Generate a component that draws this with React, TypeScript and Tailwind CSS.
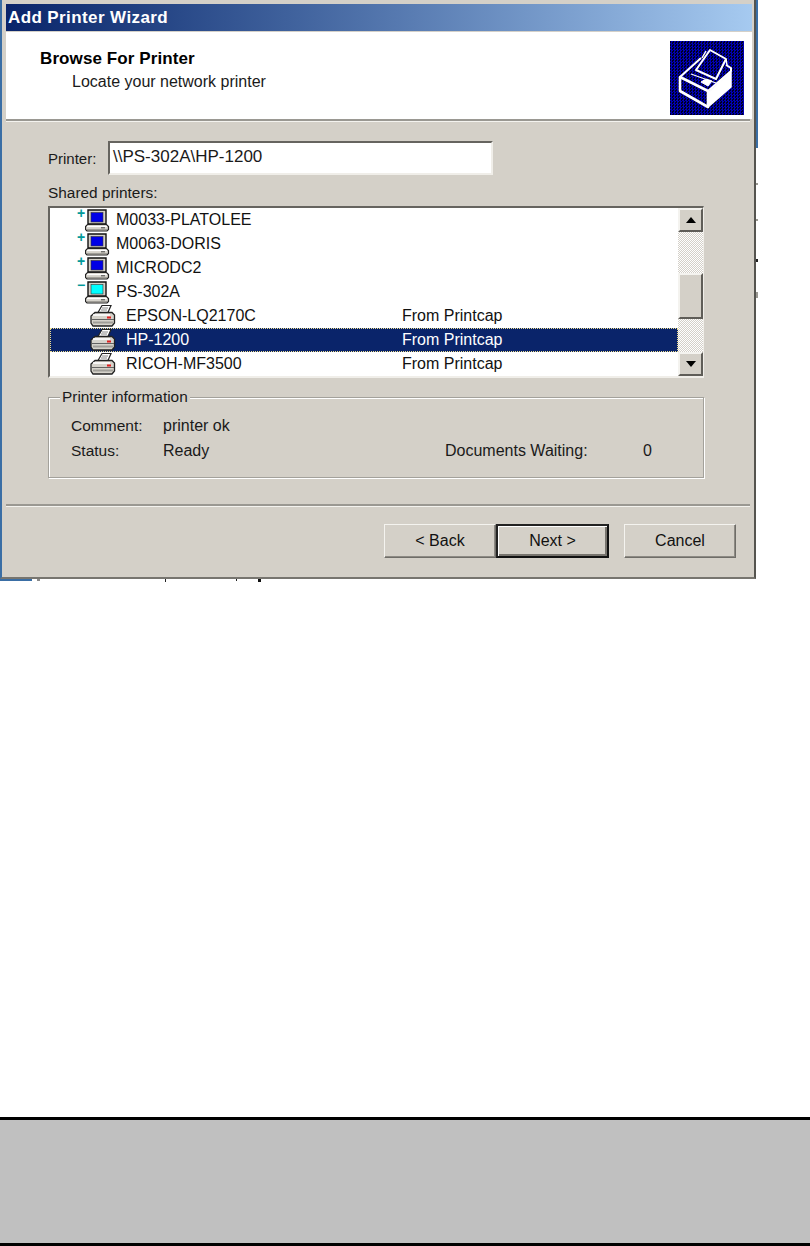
const rows = [
  { name: 'M0033-PLATOLEE', kind: 'computer', tree: '+' },
  { name: 'M0063-DORIS', kind: 'computer', tree: '+' },
  { name: 'MICRODC2', kind: 'computer', tree: '+' },
  { name: 'PS-302A', kind: 'open', tree: '-' },
  { name: 'EPSON-LQ2170C', kind: 'printer', note: 'From Printcap' },
  { name: 'HP-1200', kind: 'printer', note: 'From Printcap', selected: true },
  { name: 'RICOH-MF3500', kind: 'printer', note: 'From Printcap' },
];

function ComputerIcon({ open }: { open?: boolean }) {
  return (
    <svg width="25" height="24" viewBox="0 0 25 24" className="mt-[2px] shrink-0">
      <path d="M3 1h18v14H3z" fill="#d4d0c8" stroke="#111" strokeWidth="1.4" />
      <rect x="6" y="3.5" width="12" height="9.5" fill={open ? '#00ffff' : '#0000e6'} stroke="#333" strokeWidth="0.6" />
      <path d="M2.5 15.5h19l2 2v3l-1.5 1.5H2L.5 20.5v-3z" fill="#d6d3cb" stroke="#222" strokeWidth="1.2" />
      <path d="M2 17.5h20" stroke="#fff" strokeWidth="1.2" />
      <path d="M2 20.5h20" stroke="#a09e98" strokeWidth="1" />
      <path d="M16 18.8h4" stroke="#444" strokeWidth="1" />
    </svg>
  );
}

function PrinterIcon() {
  return (
    <svg width="26" height="24" viewBox="0 0 26 24" className="shrink-0">
      <path d="M8 8.5 12 1.5h9L18 8.5z" fill="#fff" stroke="#222" strokeWidth="1.2" />
      <path d="M12 4h6M11 6h6" stroke="#888" strokeWidth="1" />
      <path d="M5 8.5h17l2.5 2.5v8l-2.5 3H3l-2-3v-7z" fill="#d6d3cb" stroke="#222" strokeWidth="1.3" />
      <path d="M3 11h17" stroke="#fff" strokeWidth="1.6" />
      <path d="M2 15.5h22" stroke="#555" strokeWidth="0.9" />
      <path d="M3 18.5h20" stroke="#a09e98" strokeWidth="2" />
      <rect x="17" y="12.5" width="4" height="2" fill="#e02020" />
    </svg>
  );
}

function WizardIcon() {
  return (
    <div className="h-[74px] w-[74px] shrink-0 bg-[#000060] bg-[repeating-conic-gradient(#0000b4_0_25%,#000020_0_50%)] bg-[length:3px_3px]">
      <svg width="74" height="74" viewBox="0 0 74 74">
        <g fill="none" stroke="#fff" strokeLinejoin="round">
          <path d="M38 52 61 31v15L38 66z" fill="#fff" strokeWidth="1.5" />
          <path d="M10 36v14l28 16V50z" strokeWidth="2.6" />
          <path d="M10 36 31 17" strokeWidth="2" />
          <path d="M38 50 61 30V27l-5-3" strokeWidth="2" />
          <path d="M26 29 40 9l16 9-10 20z" strokeWidth="2" />
          <path d="M32 17 36 10M56 18l1 6" strokeWidth="1.5" />
          <path d="M21 33 46 42" strokeWidth="1.2" />
          <path d="m31 41 5-3 6 2-4 5z" fill="#fff" strokeWidth="1" />
        </g>
      </svg>
    </div>
  );
}

function ScrollButton({ up }: { up?: boolean }) {
  return (
    <div className="flex h-[24px] items-center justify-center border-2 border-t-[#f4f3ef] border-l-[#f4f3ef] border-r-[#5f5d58] border-b-[#5f5d58] bg-[#d4d0c8]">
      <svg width="10" height="6" viewBox="0 0 10 6">
        <path d={up ? 'M5 0 10 6H0z' : 'M0 0h10L5 6z'} fill="#000" />
      </svg>
    </div>
  );
}

function WinButton({ label, primary }: { label: string; primary?: boolean }) {
  return (
    <button
      className={
        'flex h-[34px] items-center justify-center bg-[#d4d0c8] text-[16px] text-[#111] ' +
        (primary
          ? 'w-[113px] border-2 border-t-[#222] border-l-[#222] border-r-[#111] border-b-[#111] shadow-[inset_1px_1px_0_#fff,inset_-2px_-2px_0_#77746e]'
          : 'w-[112px] border border-t-[#f4f3ef] border-l-[#f4f3ef] border-r-[#6f6d68] border-b-[#6f6d68] shadow-[inset_-1px_-1px_0_#8d8a84]')
      }
    >
      {label}
    </button>
  );
}

function Separator() {
  return <div className="h-[3px] border-t-2 border-b border-t-[#9a9892] border-b-[#f4f3ef]" />;
}

export default function App() {
  return (
    <div className="flex h-[1246px] w-[810px] flex-col overflow-hidden bg-white font-['Liberation_Sans',sans-serif] text-[16px] leading-none text-[#1a1a1a]">
      <div className="flex h-[582px] shrink-0 flex-wrap content-start">
        <div className="flex h-[579px] w-[756px] shrink-0 flex-col border-r-2 border-b-2 border-l-2 border-r-[#55544f] border-b-[#77756f] border-l-[#3a6ea5] bg-[#d4d0c8] pt-[4px]">
          <div className="mr-[2px] ml-[4px] flex h-[27px] items-center bg-gradient-to-r from-[#0a246a] to-[#a6caf0] pl-[2px] text-[17px] font-bold tracking-[0.4px] text-white">
            Add Printer Wizard
          </div>
          <div className="mt-[1px] mr-[2px] ml-[4px] flex h-[87px] justify-between bg-white pt-[9px] pr-[8px] pb-[5px] pl-[34px]">
            <div>
              <div className="mt-[9px] text-[17px] font-bold tracking-[0.1px] text-black">Browse For Printer</div>
              <div className="mt-[7px] ml-[32px] text-[16px]">Locate your network printer</div>
            </div>
            <WizardIcon />
          </div>
          <div className="mr-[4px] ml-[4px]">
            <Separator />
          </div>

          <div className="flex flex-col pt-[19px] pr-[50px] pl-[46px]">
            <div className="flex h-[34px] items-center">
              <span className="w-[60px] text-[15px]">Printer:</span>
              <div className="flex h-[34px] w-[385px] items-start border-2 border-t-[#66645f] border-l-[#66645f] border-r-[#f0eee9] border-b-[#f0eee9] bg-white pt-[5px] pl-[3px] text-[17px]">
                \\PS-302A\HP-1200
              </div>
            </div>
            <div className="mt-[10px] h-[21px] text-[15.4px]">Shared printers:</div>

            <div className="flex h-[172px] w-[656px] border-2 border-r border-t-[#66645f] border-l-[#66645f] border-r-[#f0eee9] border-b-[#f0eee9] bg-white">
              <div className="flex flex-1 flex-col">
                {rows.map((row) => (
                  <div
                    key={row.name}
                    className={
                      'flex h-[24px] shrink-0 items-center ' +
                      (row.selected
                        ? 'bg-[#0a246a] text-white outline-1 -outline-offset-1 outline-[#f0e090] outline-dotted'
                        : 'text-[#111]')
                    }
                  >
                    {row.kind === 'printer' ? (
                      <>
                        <span className="ml-[40px]"><PrinterIcon /></span>
                        <span className="ml-[10px] w-[276px] text-[16px]">{row.name}</span>
                        <span className="text-[16px]">{row.note}</span>
                      </>
                    ) : (
                      <>
                        <span className="ml-[27px] h-[12px] w-[8px] self-start text-[14px] leading-[11px] font-bold text-[#009a9a]">
                          {row.tree === '+' ? '+' : '−'}
                        </span>
                        <ComputerIcon open={row.kind === 'open'} />
                        <span className="ml-[6px] text-[16px]">{row.name}</span>
                      </>
                    )}
                  </div>
                ))}
              </div>
              <div className="flex w-[25px] flex-col bg-[#ebe9e3] bg-[repeating-conic-gradient(#d4d0c8_0_25%,#ffffff_0_50%)] bg-[length:2px_2px]">
                <ScrollButton up />
                <div className="mt-[41px] h-[46px] border-2 border-t-[#f4f3ef] border-l-[#f4f3ef] border-r-[#5f5d58] border-b-[#5f5d58] bg-[#d4d0c8]" />
                <div className="mt-auto">
                  <ScrollButton />
                </div>
              </div>
            </div>

            <div className="relative mt-[19px] h-[81px] w-[656px] border border-[#a3a19b] shadow-[1px_1px_0_#fff,inset_1px_1px_0_#fff]">
              <span className="absolute top-[-9px] left-[11px] bg-[#d4d0c8] px-[2px] text-[15.4px]">Printer information</span>
              <div className="flex pt-[20px] pl-[22px]">
                <span className="w-[92px] text-[15.5px]">Comment:</span>
                <span>printer ok</span>
              </div>
              <div className="flex pt-[9px] pl-[22px]">
                <span className="w-[92px] text-[15.5px]">Status:</span>
                <span className="w-[282px]">Ready</span>
                <span className="w-[198px]">Documents Waiting:</span>
                <span>0</span>
              </div>
            </div>
          </div>

          <div className="mt-[26px] mr-[4px] ml-[4px]">
            <Separator />
          </div>
          <div className="flex justify-end pt-[17px] pr-[18px]">
            <WinButton label="< Back" />
            <WinButton label="Next >" primary />
            <div className="w-[15px]" />
            <WinButton label="Cancel" />
          </div>
        </div>
        {/* bits of the desktop window showing behind the dialog */}
        <div className="flex w-[2px] flex-col">
          <div className="h-[148px] bg-[#3a6ea5]" />
          <div className="mt-[35px] h-[2px] bg-[#9a9892]" />
          <div className="mt-[34px] h-[2px] bg-[#9a9892]" />
          <div className="mt-[38px] h-[3px] bg-[#222]" />
          <div className="mt-[30px] h-[6px] bg-[#9a9892]" />
        </div>
        <div className="flex h-[3px] w-[756px] items-start">
          <div className="h-[2px] w-[32px] bg-[#3a6ea5]" />
          <div className="ml-[5px] h-[2px] w-[3px] bg-[#8a8a8a]" />
          <div className="ml-[125px] h-[3px] w-[1px] bg-[#222]" />
          <div className="ml-[70px] h-[2px] w-[1px] bg-[#222]" />
          <div className="ml-[21px] h-[3px] w-[3px] bg-[#111]" />
        </div>
      </div>

      <div className="mt-[535px] h-[129px] w-full shrink-0 border-y-[3px] border-black bg-[#c0c0c0]" />
    </div>
  );
}
